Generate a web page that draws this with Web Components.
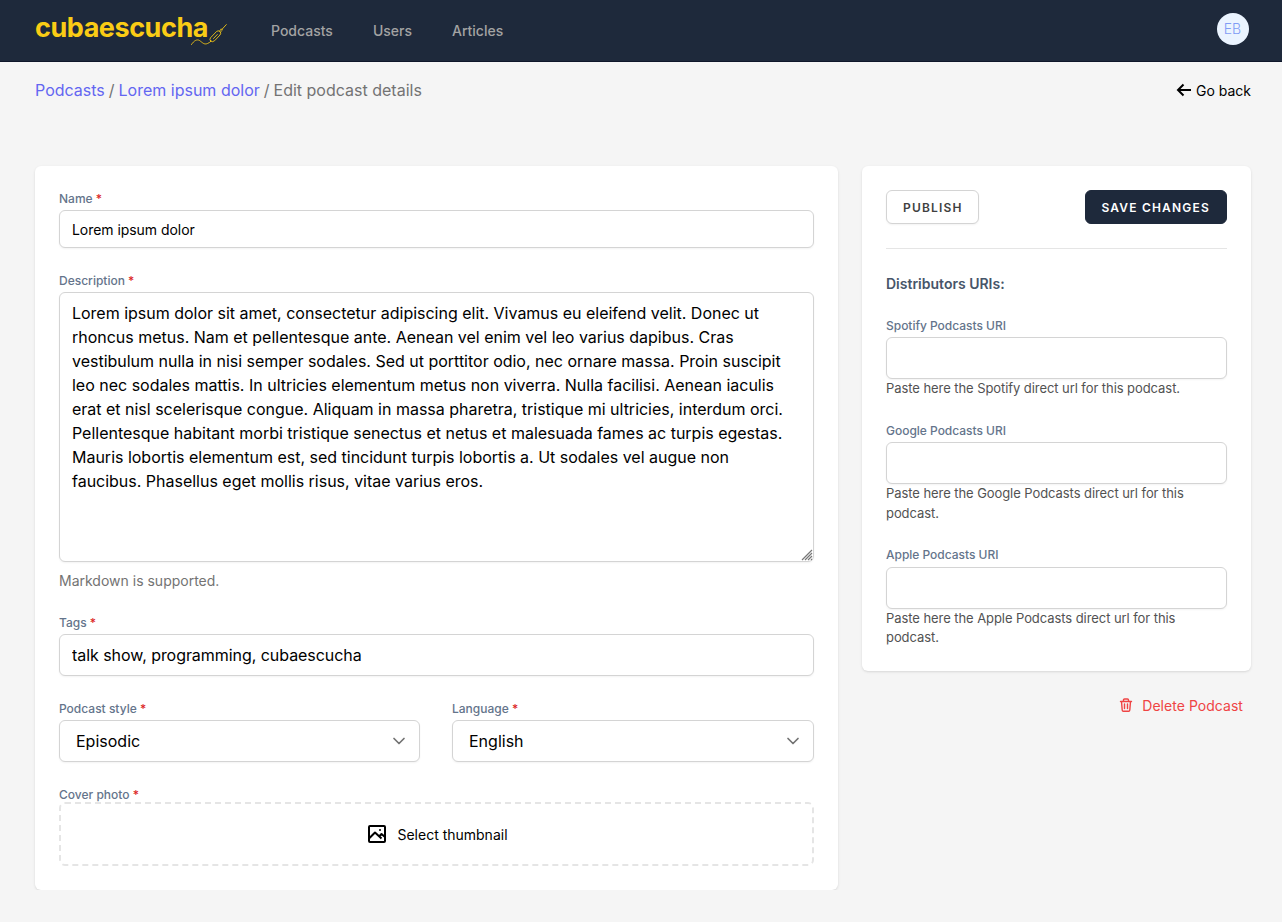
<!DOCTYPE html>
<html lang="en">
<head>
<meta charset="utf-8">
<title>Edit podcast details</title>
<style>
body{margin:0;background:#f5f5f5;font-family:Inter,"Liberation Sans",sans-serif;font-size:16px;line-height:24px;color:#000}
</style>
</head>
<body>
<podcast-page></podcast-page>
<script>
const define = (name, html, setup) => customElements.define(name, class extends HTMLElement {
  connectedCallback() {
    if (this.shadowRoot) return;
    const t = document.createElement('template');
    t.innerHTML = '<style>*{box-sizing:border-box}</style>' + html;
    this.attachShadow({mode:'open'}).append(t.content.cloneNode(true));
    if (setup) setup(this, this.shadowRoot);
  }
});

define('brand-logo', `<style>
:host{display:block;position:relative;width:194px;height:34px;color:#facc15}
b{display:block;font-size:27px;line-height:34px;font-weight:700;letter-spacing:-.45px}
svg{position:absolute;left:155px;top:13px}
</style><b>cubaescucha</b>
<svg width="40" height="24" viewBox="0 0 40 24" fill="none" stroke="#facc15" stroke-opacity=".85" stroke-width="1" stroke-linecap="round" stroke-linejoin="round">
<path d="M1.500 20.500C4 16.500 7 15 9.500 16.500C12.500 18.500 14 21 17.500 19.500Q19.500 18.800 21 17.200"/>
<path d="M20.500 17Q19.200 15.500 20.500 13.800L26.500 7.500Q28.200 6 30 7.500Q31.500 9.200 30 11L24.500 16.800Q22.500 18.600 20.500 17Z"/>
<path d="M23.500 14.500L27.300 10.500M29.700 7L31.300 4.800L32.500 6L30.500 8M32 5.300L36.300 .6"/></svg>`);

define('top-nav', `<style>
:host{display:flex;align-items:center;height:62px;background:#1e293b;border-bottom:1px solid #0f172a;padding:0 33px 0 35px}
nav{display:flex;gap:40px;margin-left:42px;font-size:14px;line-height:20px;font-weight:500;color:#a3a3a3}
brand-logo{margin-top:-6px}
.avatar{margin:-3px 0 0 auto;width:32px;height:32px;border-radius:50%;background:#ebf4ff;color:#7f9cf5;font-size:14px;font-weight:300;padding-right:1px;display:flex;align-items:center;justify-content:center}
</style><brand-logo></brand-logo><nav><span>Podcasts</span><span>Users</span><span>Articles</span></nav><div class="avatar">EB</div>`);

define('crumb-bar', `<style>
:host{display:flex;justify-content:space-between;align-items:center;padding:16px 31px 0 35px;height:40px;color:#737373}
a{color:#6366f1}.sep{margin:0 -.5px}.back{display:flex;align-items:center;gap:5px;color:#000;font-size:14px}
.back span{padding-top:2px}
</style><div><a>Podcasts</a><span class="sep"> / </span><a>Lorem ipsum dolor</a><span class="sep"> / </span>Edit podcast details</div>
<div class="back"><svg width="15" height="14" viewBox="0 0 15 14" fill="none" stroke="#000" stroke-width="2"><path d="M7.500 1.500L2 7L7.500 12.500M2 7H15"/></svg><span>Go back</span></div>`);

define('panel-card', `<style>
:host{display:block;background:#fff;border-radius:6px;padding:24px;box-shadow:0 1px 3px rgba(0,0,0,.1),0 1px 2px -1px rgba(0,0,0,.1)}
</style><slot></slot>`);

define('form-field', `<style>
:host{display:block}
.label{height:var(--label-h,20px);font-size:12px;line-height:17px;font-weight:500;color:#64748b}
.label i{font-style:normal;color:#dc2626}
.hint{color:#737373;font-size:14px;line-height:20px;margin-top:9px}
:host([compact]) .label{line-height:16px;letter-spacing:-.02px}
:host([compact]) .hint{color:#525252;font-size:13px;line-height:19.5px;letter-spacing:-.07px;margin:0}
</style><div class="label"></div><slot></slot>`, (el, root) => {
  const label = root.querySelector('.label');
  label.textContent = el.getAttribute('label');
  if (el.hasAttribute('required')) {
    const star = document.createElement('i');
    star.textContent = ' *';
    label.append(star);
  }
  if (el.hasAttribute('hint')) {
    const hint = document.createElement('div');
    hint.className = 'hint';
    hint.textContent = el.getAttribute('hint');
    root.append(hint);
  }
});

const box = 'border:1px solid #d4d4d4;border-radius:6px;background:#fff;box-shadow:0 1px 2px rgba(0,0,0,.05);';

define('text-input', `<style>
:host{display:block;font-size:16px}
input{display:block;width:100%;height:42px;padding:0 12px;font:inherit;letter-spacing:-.05px;color:#000;outline:0;${box}}
:host([small]){font-size:14px}:host([small]) input{height:38px}
</style><input type="text">`, (el, root) => root.querySelector('input').value = el.getAttribute('value') || '');

define('text-area', `<style>
:host{display:block;position:relative}
textarea{display:block;width:100%;height:270px;padding:8px 12px;font:inherit;letter-spacing:-.01px;color:#000;resize:none;outline:0;overflow:hidden;${box}}
svg{position:absolute;right:1px;bottom:1px}
</style><textarea></textarea><svg width="12" height="12" fill="none" stroke="#777" stroke-width="1.2"><path d="M1 11L11 1M4 11L11 4M7 11L11 7M10 11L11 10"/></svg>`,
(el, root) => root.querySelector('textarea').textContent = el.textContent.trim());

define('select-box', `<style>
:host{display:flex;align-items:center;justify-content:space-between;height:42px;padding:0 10px 0 16px;${box}}
</style><slot></slot><svg width="20" height="20" viewBox="0 0 20 20" fill="none" stroke="#737373" stroke-width="1.7" stroke-linecap="round" stroke-linejoin="round"><path d="M5 7.500l5 5 5-5"/></svg>`);

define('drop-zone', `<style>
:host{display:flex;align-items:center;justify-content:center;gap:8px;height:64px;border:2px dashed #e5e5e5;border-radius:6px;font-size:14px}
span{padding-top:2px}
</style><svg width="24" height="24" viewBox="0 0 24 24" fill="none" stroke="#000" stroke-width="2" stroke-linejoin="round"><rect x="4" y="4" width="16" height="16" rx="1"/><path d="M4 16.500l6-6 6.500 6M14 14.500l2.500-2.500 3.500 3"/><circle cx="15" cy="8" r="1" fill="#000" stroke="none"/></svg><span><slot></slot></span>`);

define('action-button', `<style>
:host{display:flex;align-items:center;height:34px;padding:1px 15px 0 16px;font-size:12px;line-height:16px;font-weight:600;letter-spacing:1.2px;color:#404040;${box}}
:host([primary]){padding:1px 16px 0 15.400px;background:#1e293b;border-color:#1e293b;color:#fff;box-shadow:none}
</style><slot></slot>`);

define('delete-link', `<style>
:host{display:flex;justify-content:flex-end;align-items:center;gap:8px;padding-right:8px;margin-top:23px;font-size:14px;letter-spacing:.04px;color:#ef4444}
svg{margin-top:-1px}
</style><svg width="16" height="16" viewBox="0 0 16 16" fill="none" stroke="#ef4444" stroke-width="1.400" stroke-linecap="round" stroke-linejoin="round"><path d="M2.500 4.500H13.500M3.500 4.500L4.200 13Q4.300 14.200 5.300 14.200H10.700Q11.700 14.200 11.800 13L12.500 4.500M5.500 4.500V3Q5.500 2 6.500 2H9.500Q10.500 2 10.500 3V4.500M6.500 7V11.500M9.500 7V11.500"/></svg><slot></slot>`);

define('podcast-page', `<style>
:host{display:block}
main{display:grid;grid-template-columns:803px 389px;gap:24px;align-items:start;padding:64px 31px 0 35px}
.form{display:flex;flex-direction:column;gap:24px}
.pair{display:grid;grid-template-columns:361px 362px;gap:32px}
.cover{--label-h:16px}
.desc{margin-bottom:-1px}
.actions{display:flex;justify-content:space-between;padding-bottom:24px;border-bottom:1px solid #e5e5e5}
h2{margin:25px 0 23.600px;font-size:14px;line-height:20px;font-weight:600;color:#475569}
.uris{display:flex;flex-direction:column;gap:24px;--label-h:19.5px;margin-bottom:-.8px}
</style>
<top-nav></top-nav><crumb-bar></crumb-bar>
<main>
<panel-card><div class="form">
<form-field label="Name" required><text-input small value="Lorem ipsum dolor"></text-input></form-field>
<form-field class="desc" label="Description" required hint="Markdown is supported."><text-area>Lorem ipsum dolor sit amet, consectetur adipiscing elit. Vivamus eu eleifend velit. Donec ut rhoncus metus. Nam et pellentesque ante. Aenean vel enim vel leo varius dapibus. Cras vestibulum nulla in nisi semper sodales. Sed ut porttitor odio, nec ornare massa. Proin suscipit leo nec sodales mattis. In ultricies elementum metus non viverra. Nulla facilisi. Aenean iaculis erat et nisl scelerisque congue. Aliquam in massa pharetra, tristique mi ultricies, interdum orci. Pellentesque habitant morbi tristique senectus et netus et malesuada fames ac turpis egestas. Mauris lobortis elementum est, sed tincidunt turpis lobortis a. Ut sodales vel augue non faucibus. Phasellus eget mollis risus, vitae varius eros.</text-area></form-field>
<form-field label="Tags" required><text-input value="talk show, programming, cubaescucha"></text-input></form-field>
<div class="pair">
<form-field label="Podcast style" required><select-box>Episodic</select-box></form-field>
<form-field label="Language" required><select-box>English</select-box></form-field>
</div>
<form-field class="cover" label="Cover photo" required><drop-zone>Select thumbnail</drop-zone></form-field>
</div></panel-card>
<aside>
<panel-card>
<div class="actions"><action-button>PUBLISH</action-button><action-button primary>SAVE CHANGES</action-button></div>
<h2>Distributors URIs:</h2>
<div class="uris">
<form-field compact label="Spotify Podcasts URI" hint="Paste here the Spotify direct url for this podcast."><text-input></text-input></form-field>
<form-field compact label="Google Podcasts URI" hint="Paste here the Google Podcasts direct url for this podcast."><text-input></text-input></form-field>
<form-field compact label="Apple Podcasts URI" hint="Paste here the Apple Podcasts direct url for this podcast."><text-input></text-input></form-field>
</div></panel-card>
<delete-link>Delete Podcast</delete-link>
</aside>
</main>`);
</script>
</body>
</html>
